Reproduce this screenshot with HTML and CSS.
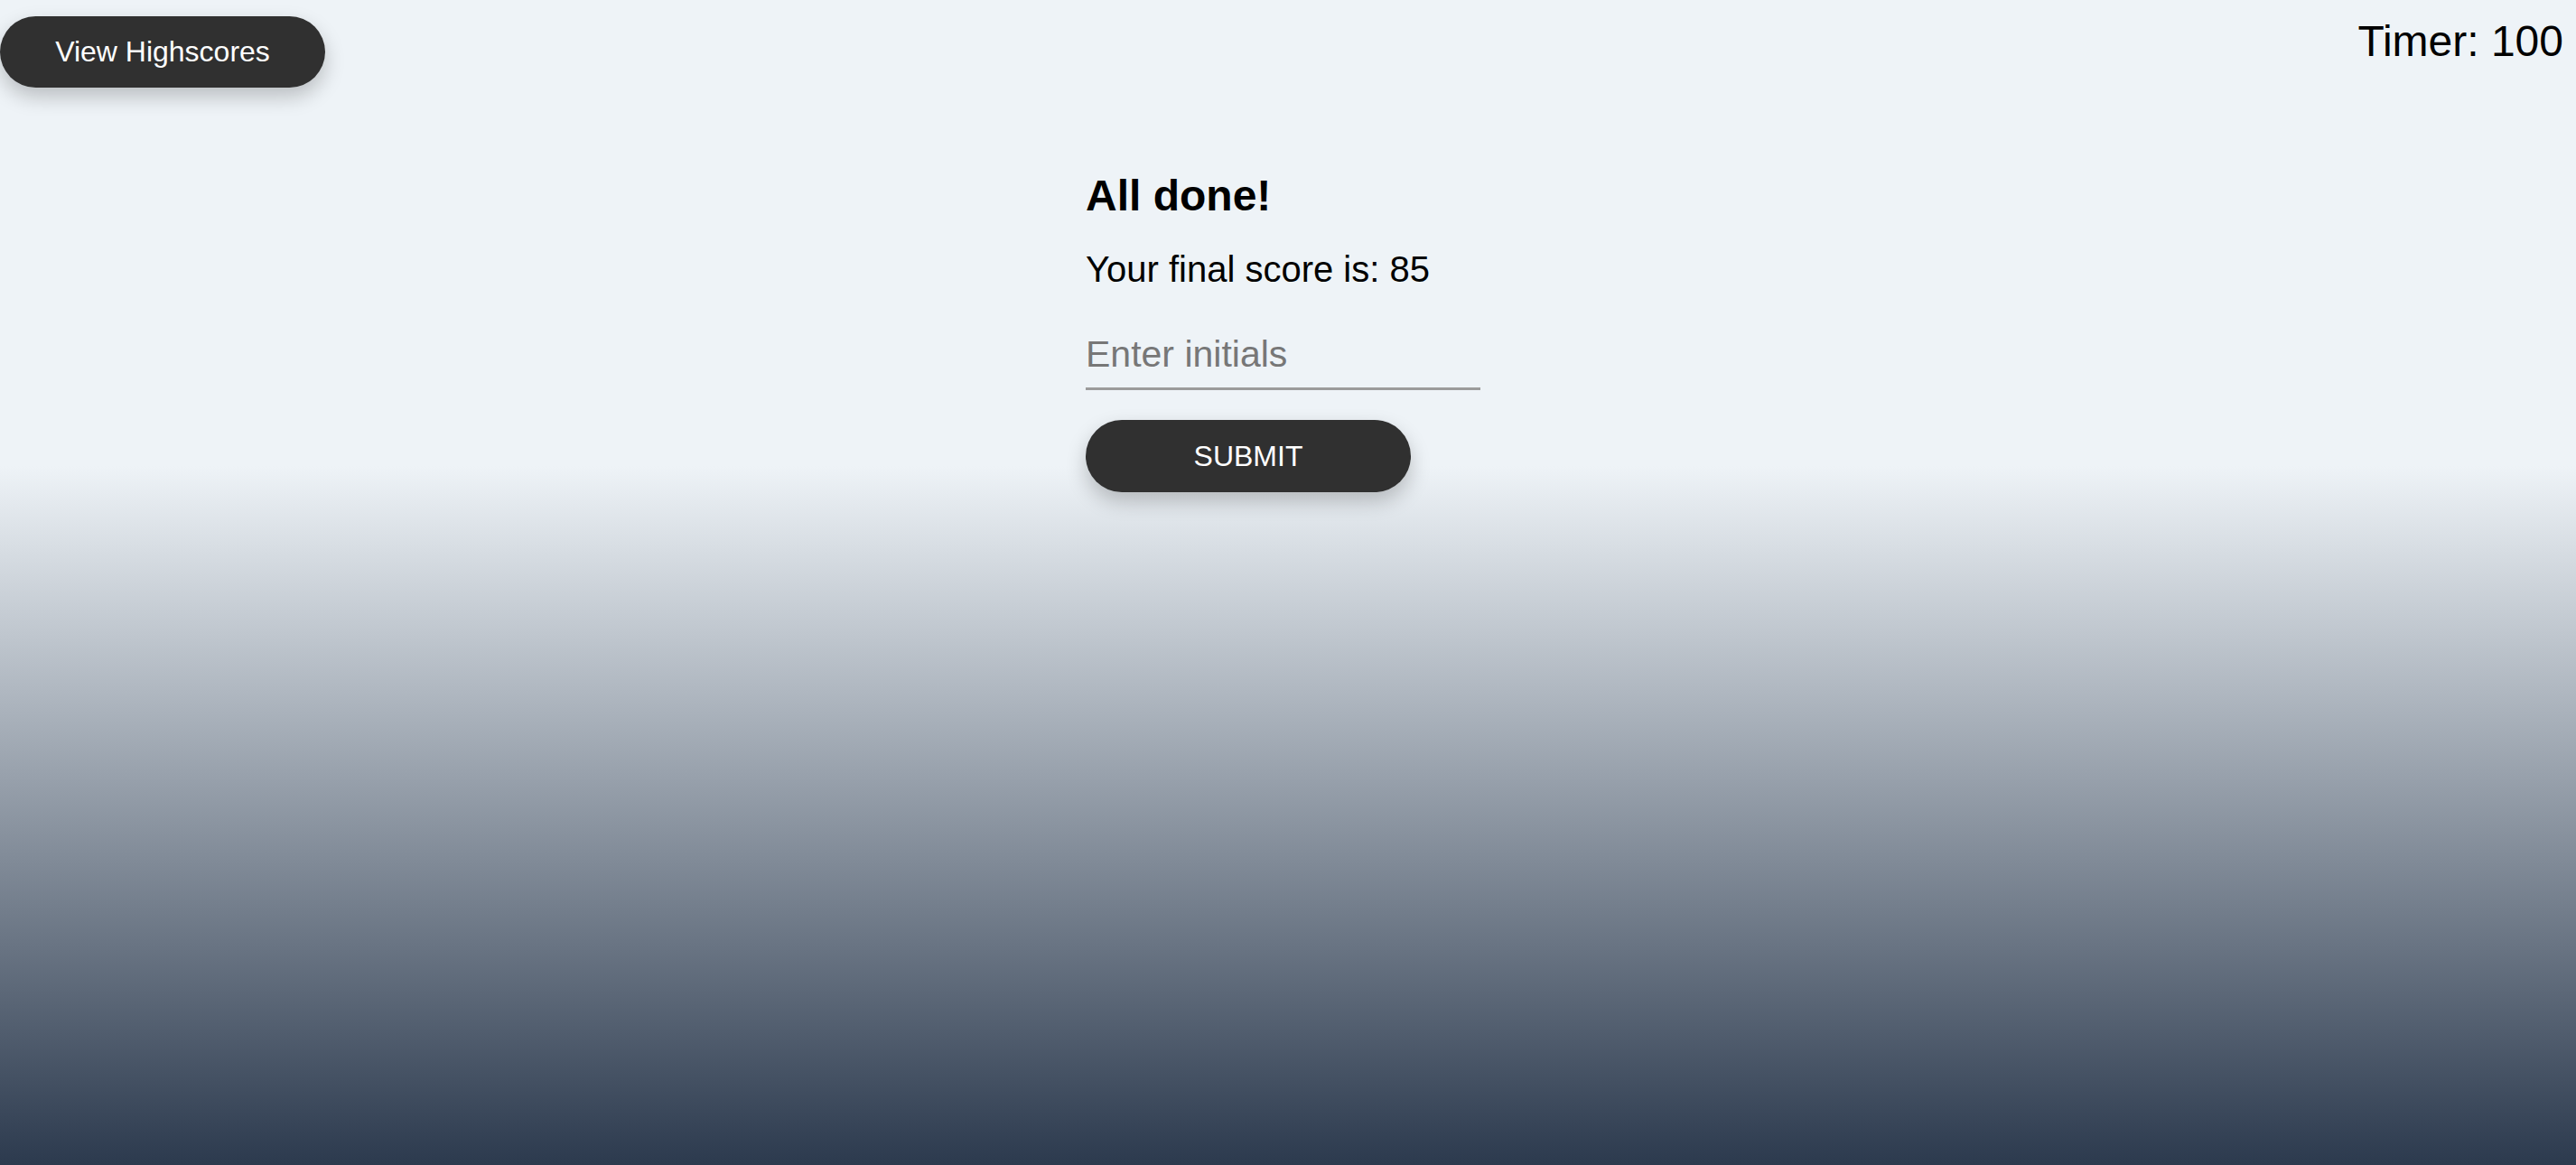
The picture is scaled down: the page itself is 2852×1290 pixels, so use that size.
FILE: index.html
```html
<!DOCTYPE html>
<html lang="en">
<head>
<meta charset="utf-8">
<title>Quiz</title>
<link rel="stylesheet" href="styles.css">
</head>
<body>
<header class="top">
  <button class="pill pill-nav" type="button">View Highscores</button>
  <div class="timer">Timer: 100</div>
</header>
<main class="done">
  <h1 class="done-title">All done!</h1>
  <p class="done-score">Your final score is: 85</p>
  <input class="initials" type="text" placeholder="Enter initials">
  <button class="pill pill-submit" type="button">Submit</button>
</main>
</body>
</html>
```
FILE: styles.css
```css
html, body {
  margin: 0;
  padding: 0;
  height: 100%;
}
body {
  font-family: "Liberation Sans", Arial, Helvetica, sans-serif;
  color: #000;
  background: linear-gradient(to bottom, #eef3f7 0%, #eef3f7 40%, #2c3a4e 100%);
  overflow: hidden;
}
.top {
  display: flex;
  justify-content: space-between;
  align-items: flex-start;
}
.pill {
  border: none;
  background: #303030;
  color: #fff;
  font-family: "Liberation Sans", Arial, Helvetica, sans-serif;
  font-size: 32px;
  width: 360px;
  height: 80px;
  border-radius: 40px;
  box-shadow: 0 10px 22px rgba(0, 0, 0, 0.22);
  padding: 0;
  cursor: pointer;
}
.pill-nav {
  margin-top: 18px;
  height: 79px;
}
.timer {
  font-size: 48px;
  line-height: 58px;
  padding-top: 17px;
  padding-right: 14px;
}
.done {
  width: 448px;
  margin: 91px auto 0;
  display: flex;
  flex-direction: column;
  align-items: flex-start;
}
.done-title {
  margin: 0;
  font-size: 48px;
  line-height: 58px;
  font-weight: bold;
}
.done-score {
  margin: 29px 0 0;
  font-size: 40px;
  line-height: 46px;
}
.initials {
  margin-top: 28px;
  width: 437px;
  box-sizing: border-box;
  font-family: "Liberation Sans", Arial, Helvetica, sans-serif;
  font-size: 41px;
  line-height: 46px;
  height: 83px;
  padding: 20px 0 14px;
  border: none;
  border-bottom: 3px solid #9b9b9b;
  background: transparent;
  outline: none;
  color: #000;
}
.initials::placeholder {
  color: #777;
}
.pill-submit {
  margin-top: 33px;
  text-transform: uppercase;
}
```
